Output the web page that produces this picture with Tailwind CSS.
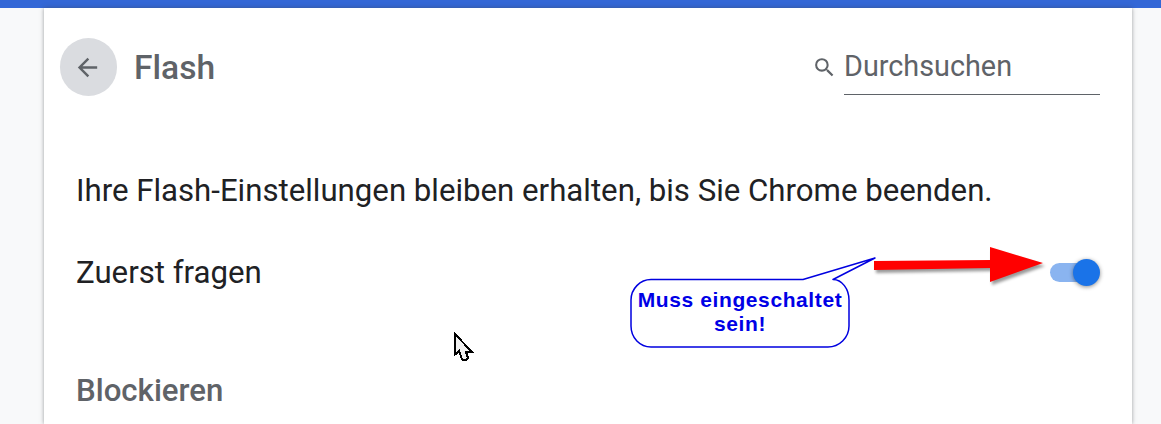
<!DOCTYPE html>
<html lang="de">
<head>
<meta charset="utf-8">
<script src="https://cdn.jsdelivr.net/npm/@tailwindcss/browser@4"></script>
</head>
<body class="m-0 w-[1161px] h-[424px] overflow-hidden bg-[#f8f9fa] font-['Roboto',sans-serif]">
<div class="h-2 bg-[#3367d6]"></div>
<main class="relative ml-11 w-[1088px] h-[416px] bg-white shadow-[0_0_4px_rgba(60,64,67,0.5)] px-8 overflow-hidden">
  <header class="flex items-center h-[118px] -ml-4">
    <div class="w-[57px] h-[58px] rounded-full bg-[#dadce0] flex items-center justify-center shrink-0">
      <svg class="w-[29px] h-[29px] -ml-[2px]" viewBox="0 0 24 24" fill="#5f6368"><path d="M20 11H7.83l5.59-5.59L12 4l-8 8 8 8 1.41-1.41L7.83 13H20v-2z"/></svg>
    </div>
    <h1 class="ml-[17px] pt-[2px] text-[33.6px] font-medium text-[#5f6368] leading-none">Flash</h1>
    <div class="ml-auto mr-0 flex items-center relative">
      <svg class="absolute left-[-32px] top-[15px] w-[25px] h-[25px]" viewBox="0 0 24 24" fill="#5f6368"><path d="M15.5 14h-.79l-.28-.27A6.47 6.47 0 0 0 16 9.5 6.5 6.5 0 1 0 9.5 16c1.61 0 3.09-.59 4.23-1.57l.27.28v.79l5 4.99L20.49 19l-4.99-5zm-6 0C7.01 14 5 11.99 5 9.5S7.01 5 9.5 5 14 7.01 14 9.5 11.99 14 9.5 14z"/></svg>
      <div class="w-[256px] h-[55px] border-b border-[#5f6368] text-[28.8px] leading-[52px] text-[#5f6368]">Durchsuchen</div>
    </div>
  </header>
  <p class="mt-[47px] text-[31.2px] leading-[36px] text-[#202124]">Ihre Flash-Einstellungen bleiben erhalten, bis Sie Chrome beenden.</p>
  <div class="mt-[45px] flex items-center justify-between h-9">
    <span class="pt-[2px] text-[31.2px] leading-[36px] text-[#202124]">Zuerst fragen</span>
    <span class="relative w-[50px] h-[27px] shrink-0">
      <span class="absolute left-0 top-[4px] w-[47px] h-[19px] rounded-full bg-[#8ab4f0]"></span>
      <span class="absolute right-0 top-0 w-[27px] h-[27px] rounded-full bg-[#1a73e8] shadow-[0_1px_4px_rgba(0,0,0,0.45)]"></span>
    </span>
  </div>
  <h2 class="mt-[83px] text-[31.2px] leading-[36px] font-medium text-[#5f6368]">Blockieren</h2>

  <!-- Sprechblase -->
  <svg class="absolute left-[586px] top-[240px]" width="250" height="112" viewBox="0 0 250 112" fill="none">
    <path d="M21 31.5H173L245 10L203 31.5C212 31.5 219 41 219 52V78C219 90 209 99 198 99H21C10 99 1 90 1 78V52C1 41 10 31.5 21 31.5Z" fill="#fff" stroke="#0000e0" stroke-width="1.5" stroke-linejoin="round"/>
  </svg>
  <div class="absolute left-[587px] top-[280px] w-[218px] text-center font-['Liberation_Sans',sans-serif] font-bold text-[21px] tracking-[0.6px] leading-[24px] text-[#0000e6]">Muss eingeschaltet<br>sein!</div>

  <!-- Roter Pfeil -->
  <svg class="absolute left-[826px] top-[232px]" width="180" height="50" viewBox="0 0 180 50" style="filter:drop-shadow(2px 3px 1.5px rgba(0,0,0,.4))">
    <path d="M4 21L120 20V7L173 23L120 42V28L4 30Z" fill="#ff0000"/>
  </svg>

  <!-- Mauszeiger -->
  <svg class="absolute left-[409px] top-[324px]" width="22" height="30" viewBox="0 0 22 30" shape-rendering="crispEdges">
    <path d="M1.5 1.5V23L6 19L9 27L10 28H13L15 26L13 20H19Z" fill="#f0f0f0" stroke="#000" stroke-width="2"/>
  </svg>
</main>
</body>
</html>
